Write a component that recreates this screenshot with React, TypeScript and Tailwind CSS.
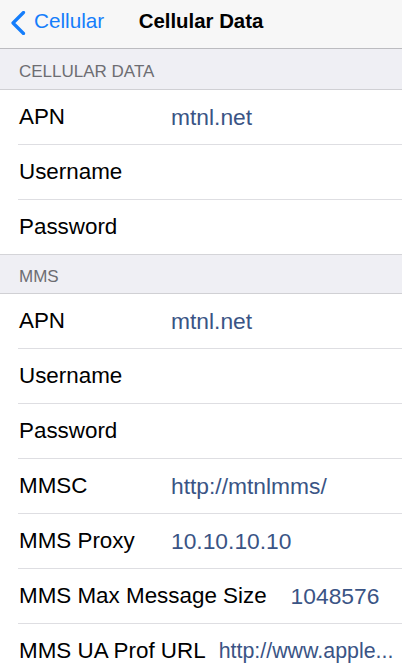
import React from 'react';

interface Row {
  label: string;
  value?: string;
  valueClass?: string;
}

const cellularRows: Row[] = [
  { label: 'APN', value: 'mtnl.net' },
  { label: 'Username' },
  { label: 'Password' },
];

const mmsRows: Row[] = [
  { label: 'APN', value: 'mtnl.net' },
  { label: 'Username' },
  { label: 'Password' },
  { label: 'MMSC', value: 'http://mtnlmms/' },
  { label: 'MMS Proxy', value: '10.10.10.10' },
  { label: 'MMS Max Message Size', value: '1048576', valueClass: 'ml-[24px]' },
  { label: 'MMS UA Prof URL', value: 'http://www.apple...', valueClass: 'ml-[13px] text-[21.4px]' },
];

const SettingsRow = ({ row, last }: { row: Row; last: boolean }) => (
  <div className={last ? 'bg-white' : 'bg-white pl-[18px]'}>
    <div
      className={`h-[55px] flex items-center border-b ${
        last ? 'border-[#d4d4d8] pl-[19px]' : 'border-[#dedee2] pl-px'
      }`}
    >
      <span
        className={`text-[22.4px] text-black whitespace-nowrap ${
          row.valueClass ? '' : 'w-[152px] shrink-0'
        }`}
      >
        {row.label}
      </span>
      {row.value && (
        <span
          className={`text-[#3a5485] whitespace-nowrap ${
            row.valueClass ?? ''
          } ${row.valueClass?.includes('text-[') ? '' : 'text-[22.8px]'}`}
        >
          {row.value}
        </span>
      )}
    </div>
  </div>
);

const SectionHeader = ({ title, tall }: { title: string; tall?: boolean }) => (
  <div
    className={`bg-[#efeff4] border-b border-[#d0d0d4] pl-[19px] text-[17px] leading-[17px] text-[#6d6d72] ${
      tall ? 'h-[41px] pt-[14px]' : 'h-[39px] pt-[13px]'
    }`}
  >
    {title}
  </div>
);

export default function App() {
  return (
    <div
      className="w-[402px] h-[671px] overflow-hidden bg-white"
      style={{ fontFamily: '"Liberation Sans", Arial, sans-serif' }}
    >
      <div className="h-[49px] bg-[#f7f7f7] border-b border-[#bcbcc0]">
        <div className="h-[42px] grid grid-cols-[1fr_auto_1fr] items-center">
          <div className="flex items-center">
            <svg width="16" height="24" viewBox="0 0 16 24" className="ml-[10px] mt-[4px]">
              <polyline
                points="13.5,1.5 3,12 13.5,22.5"
                fill="none"
                stroke="#157efb"
                strokeWidth="3.2"
                strokeLinecap="round"
                strokeLinejoin="round"
              />
            </svg>
            <span className="ml-[8px] text-[20.7px] text-[#157efb]">Cellular</span>
          </div>
          <div className="text-[20.4px] font-bold text-black">Cellular Data</div>
          <div />
        </div>
      </div>

      <SectionHeader title="CELLULAR DATA" tall />
      {cellularRows.map((row, i) => (
        <SettingsRow key={'c' + i} row={row} last={i === cellularRows.length - 1} />
      ))}

      <SectionHeader title="MMS" />
      {mmsRows.map((row, i) => (
        <SettingsRow key={'m' + i} row={row} last={false} />
      ))}
    </div>
  );
}
